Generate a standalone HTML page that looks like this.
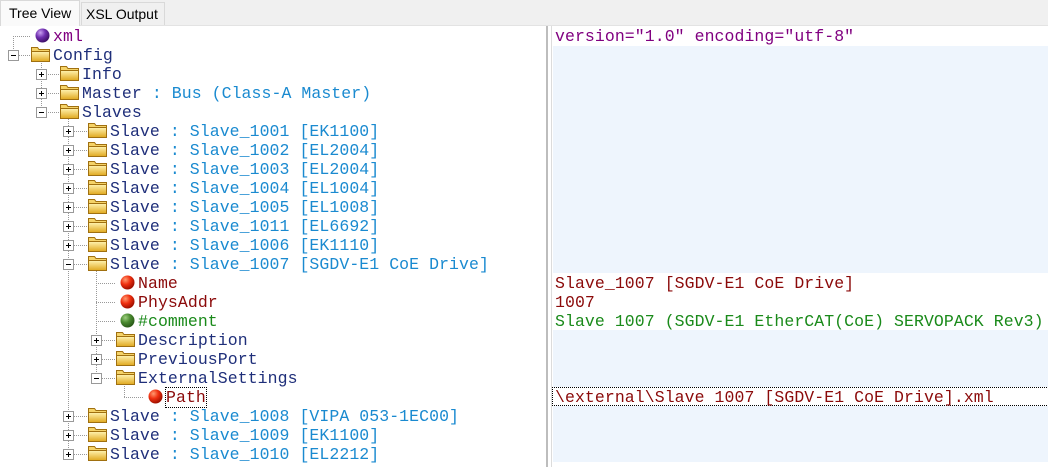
<!DOCTYPE html>
<html><head><meta charset="utf-8">
<style>
html,body{margin:0;padding:0;width:1048px;height:467px;overflow:hidden;background:#fff;position:relative}
.tabbar{position:absolute;left:0;top:0;width:1048px;height:25px;background:#f0f0f0;border-bottom:1px solid #e3e3e3}
.tab{position:absolute;top:2px;height:23px;font:14px "Liberation Sans",sans-serif;line-height:22px;color:#000;box-sizing:border-box}
.t1{left:0;width:80px;top:0;height:26px;background:#fafafa;border:1px solid #d9d9d9;border-bottom:none;padding-left:8px;line-height:25px}
.t2{left:81px;width:84px;background:#f0f0f0;border:1px solid #d9d9d9;border-bottom:none;padding-left:4px}
.row{position:absolute;height:19px;font:16.5px "Liberation Mono",monospace;line-height:19px;white-space:pre;letter-spacing:0.07px}
.tg{color:#1f2f7a}.v{color:#1a8ad0}.r{color:#8b0a0a}.g{color:#1a8a1a}.p{color:#800080}
.h{position:absolute;height:0;border-top:1px dotted #999}
.vl{position:absolute;width:0;border-left:1px dotted #999}
.ex{position:absolute;width:9px;height:9px;border:1px solid #999;background:#fff}
.ex::before{content:"";position:absolute;left:2px;top:4px;width:5px;height:1px;background:#000}
.ex.pl::after{content:"";position:absolute;left:4px;top:2px;width:1px;height:5px;background:#000}
svg.ic{position:absolute}
.rp{position:absolute;left:553px;width:495px}
</style></head><body>
<div class="tabbar"></div>
<div class="tab t2">XSL Output</div>
<div class="tab t1">Tree View</div>

<div style="position:absolute;left:546px;top:26px;width:2px;height:441px;background:#bdbdbd"></div>
<div style="position:absolute;left:551px;top:26px;width:1px;height:441px;background:#dcdcdc"></div>

<div class="rp" style="top:46px;height:227px;background:#eef5fd"></div>
<div class="rp" style="top:330px;height:57px;background:#eef5fd"></div>
<div class="rp" style="top:406px;height:56px;background:#eef5fd"></div>
<div class="rp" style="top:387px;height:17px;border:1px dotted #000;box-sizing:content-box;left:552px"></div>
<div class="row p" style="left:555px;top:27px">version="1.0" encoding="utf-8"</div>
<div class="row r" style="left:555px;top:274px">Slave_1007 [SGDV-E1 CoE Drive]</div>
<div class="row r" style="left:555px;top:293px">1007</div>
<div class="row g" style="left:555px;top:312px">Slave 1007 (SGDV-E1 EtherCAT(CoE) SERVOPACK Rev3)</div>
<div class="row r" style="left:555px;top:388px">\external\Slave 1007 [SGDV-E1 CoE Drive].xml</div>

<svg width="0" height="0" style="position:absolute">
<defs>
<linearGradient id="fg" x1="0" y1="0" x2="0" y2="1"><stop offset="0" stop-color="#fff3b0"/><stop offset="1" stop-color="#e0a81e"/></linearGradient>
<radialGradient id="rb" cx="0.35" cy="0.3" r="0.7"><stop offset="0" stop-color="#ff9a70"/><stop offset="0.5" stop-color="#f03010"/><stop offset="1" stop-color="#a01000"/></radialGradient>
<radialGradient id="gb" cx="0.35" cy="0.3" r="0.7"><stop offset="0" stop-color="#9fcf80"/><stop offset="0.5" stop-color="#4a8a30"/><stop offset="1" stop-color="#2a5a18"/></radialGradient>
<radialGradient id="pb" cx="0.35" cy="0.3" r="0.7"><stop offset="0" stop-color="#c9a0f0"/><stop offset="0.5" stop-color="#7030b0"/><stop offset="1" stop-color="#40106a"/></radialGradient>
<g id="fold"><path d="M1.5 2.5h6l1.5 2H19.5v12H1.5z" fill="#f5d368" stroke="#a07010"/><path d="M1.5 6.5h18v10H1.5z" fill="url(#fg)" stroke="#a07010"/></g>
</defs></svg>

<div class="vl" style="left:13px;top:36px;height:19px"></div>
<div class="vl" style="left:41px;top:60px;height:52px"></div>
<div class="vl" style="left:68px;top:117px;height:337px"></div>
<div class="vl" style="left:96px;top:270px;height:108px"></div>
<div class="vl" style="left:124px;top:383px;height:14px"></div>

<div id="tree"></div>
<script>
var rows=[
[0,'b','pb','<span class="p">xml</span>',0],
[0,'f','','<span class="tg">Config</span>',2],
[1,'f','','<span class="tg">Info</span>',1],
[1,'f','','<span class="tg">Master</span><span class="v"> : Bus (Class-A Master)</span>',1],
[1,'f','','<span class="tg">Slaves</span>',2],
];
var s=[['1001','EK1100'],['1002','EL2004'],['1003','EL2004'],['1004','EL1004'],['1005','EL1008'],['1011','EL6692'],['1006','EK1110']];
s.forEach(function(a){rows.push([2,'f','','<span class="tg">Slave</span><span class="v"> : Slave_'+a[0]+' ['+a[1]+']</span>',1]);});
rows.push([2,'f','','<span class="tg">Slave</span><span class="v"> : Slave_1007 [SGDV-E1 CoE Drive]</span>',2]);
rows.push([3,'b','rb','<span class="r">Name</span>',0]);
rows.push([3,'b','rb','<span class="r">PhysAddr</span>',0]);
rows.push([3,'b','gb','<span class="g">#comment</span>',0]);
rows.push([3,'f','','<span class="tg">Description</span>',1]);
rows.push([3,'f','','<span class="tg">PreviousPort</span>',1]);
rows.push([3,'f','','<span class="tg">ExternalSettings</span>',2]);
rows.push([4,'b','rb','<span class="r" style="outline:1px dotted #000">Path</span>',0]);
[['1008','VIPA 053-1EC00'],['1009','EK1100'],['1010','EL2212']].forEach(function(a){rows.push([2,'f','','<span class="tg">Slave</span><span class="v"> : Slave_'+a[0]+' ['+a[1]+']</span>',1]);});
var ex=[13,41,68,96,124],tx=[53,82,110,138,166];
var h='';
rows.forEach(function(r,i){
 var cy=36+19*i,L=r[0],x=ex[L],t=tx[L];
 var iconL=t-23;
 h+='<div class="h" style="left:'+x+'px;top:'+cy+'px;width:'+(iconL-x)+'px"></div>';
 if(r[4]) h+='<div class="ex'+(r[4]==1?' pl':'')+'" style="left:'+(x-5)+'px;top:'+(cy-5)+'px"></div>';
 if(r[1]=='f') h+='<svg class="ic" width="22" height="19" style="left:'+(iconL)+'px;top:'+(cy-10)+'px"><use href="#fold"/></svg>';
 else h+='<svg class="ic" width="16" height="16" style="left:'+(iconL+5)+'px;top:'+(cy-8)+'px"><circle cx="7.5" cy="7.5" r="7" fill="url(#'+r[2]+')"/></svg>';
 h+='<div class="row" style="left:'+t+'px;top:'+(cy-9)+'px">'+r[3]+'</div>';
});
document.getElementById('tree').innerHTML=h;
</script>
</body></html>
